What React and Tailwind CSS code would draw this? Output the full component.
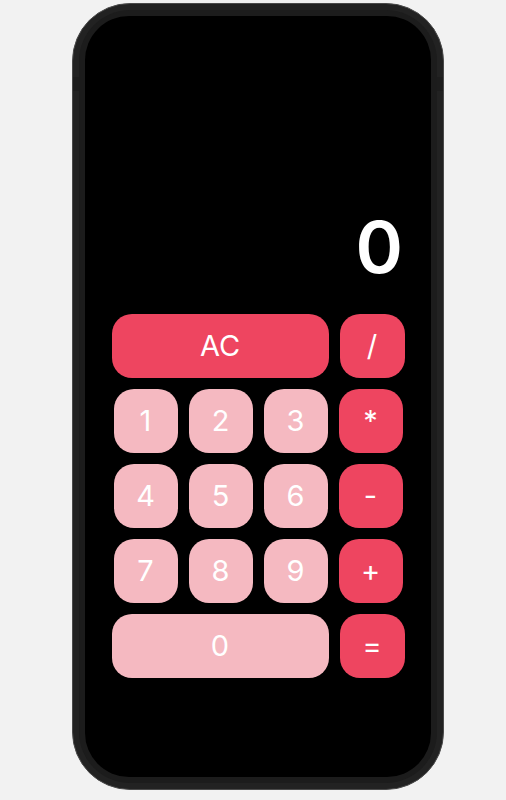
import React from "react";

const rows = [
  [{ label: "AC", type: "op", wide: true }, { label: "/", type: "op" }],
  [{ label: "1" }, { label: "2" }, { label: "3" }, { label: "*", type: "op" }],
  [{ label: "4" }, { label: "5" }, { label: "6" }, { label: "-", type: "op" }],
  [{ label: "7" }, { label: "8" }, { label: "9" }, { label: "+", type: "op" }],
  [{ label: "0", wide: true }, { label: "=", type: "op" }],
];

export default function App() {
  return (
    <div
      className="min-h-[800px] w-full bg-[#f2f2f2] pl-[72px] pt-[3px]"
      style={{ fontFamily: "Inter, 'Noto Sans', sans-serif" }}
    >
      <div className="relative w-[372px] h-[787px] rounded-[58px] bg-[#222222] border border-[#4a4a4a] p-[6px]">
        <div className="absolute left-0 top-[73px] w-[6px] h-[14px] bg-[#1d1d1d]" />
        <div className="absolute right-0 top-[73px] w-[6px] h-[14px] bg-[#1d1d1d]" />
        <div className="w-full h-full rounded-[51px] bg-[#1c1c1c] p-[6px]">
          <div className="w-full h-full rounded-[44px] bg-black flex flex-col items-center">
            <div className="w-[292px] mt-[195px] text-right text-white text-[72px] leading-none font-semibold pr-[1px]">
              0
            </div>
            <div className="mt-[31px] flex flex-col items-center gap-[11px]">
              {rows.map((row, i) => {
                const wideRow = row.length === 2;
                return (
                  <div key={i} className="flex gap-[11px]">
                    {row.map((k) => (
                      <button
                        key={k.label}
                        className={
                          (k.wide
                            ? "w-[217px] "
                            : wideRow
                            ? "w-[65px] "
                            : "w-[64px] ") +
                          (k.type === "op" ? "bg-[#ee4560] " : "bg-[#f5b9c1] ") +
                          "h-[64px] rounded-[20px] text-white text-[29px] font-normal flex items-center justify-center"
                        }
                      >
                        {k.label}
                      </button>
                    ))}
                  </div>
                );
              })}
            </div>
          </div>
        </div>
      </div>
    </div>
  );
}
